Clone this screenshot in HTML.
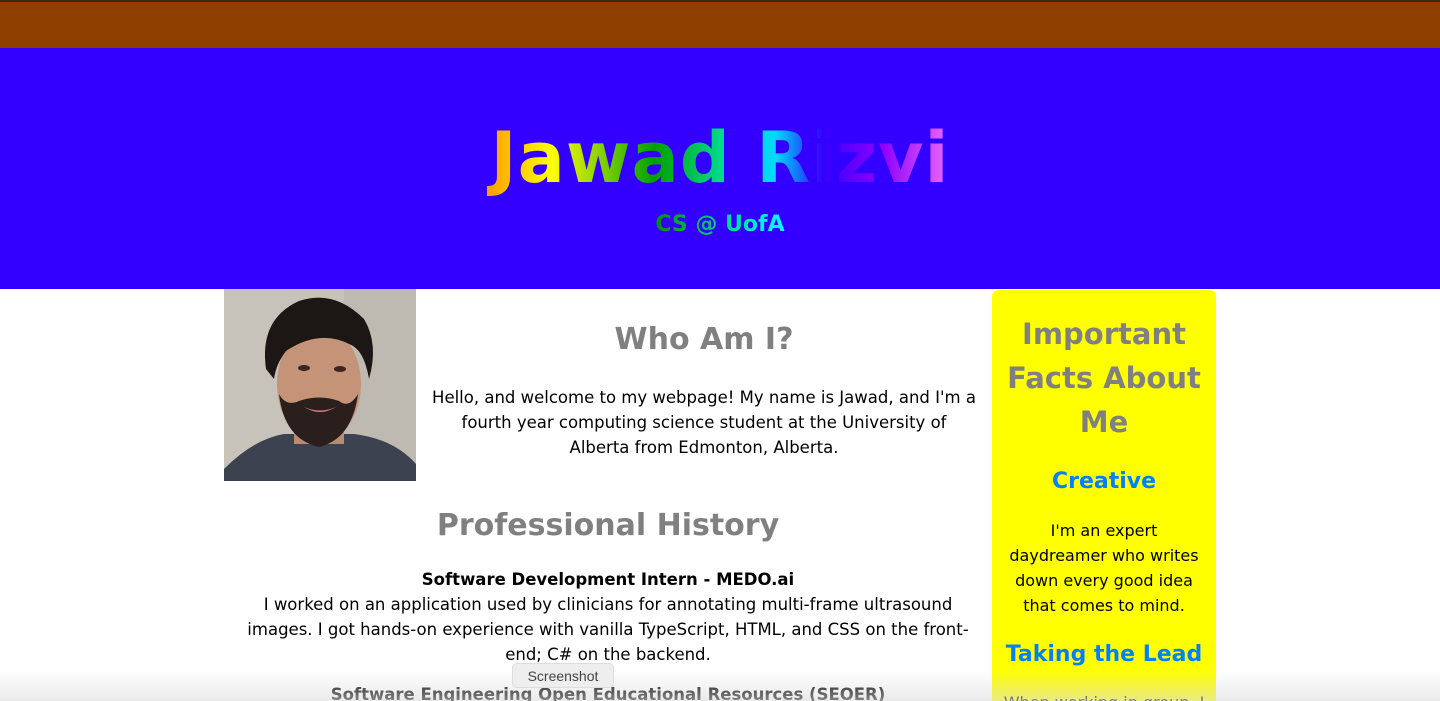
<!DOCTYPE html>
<html style="width:1440px;height:701px;overflow:hidden"><head><meta charset="utf-8"><style>
*{margin:0;padding:0;box-sizing:border-box}
body{width:1440px;height:701px;overflow:hidden;background:#fff;font-family:"Comic Sans MS","DejaVu Sans","Liberation Sans",sans-serif;position:relative}
.top{position:absolute;left:0;top:0;width:1440px;height:48px;background:#8f3f00;border-top:2px solid #3a2a1a}
.hdr{position:absolute;left:0;top:48px;width:1440px;height:241px;background:#3300ff;text-align:center}
.name{position:absolute;left:0;right:0;top:60px;font-size:70px;font-weight:bold;letter-spacing:1px;line-height:100px;}
.name span{background:linear-gradient(90deg,#ff9d00 0%,#ffff00 14%,#00a000 36%,#00e0a0 52%,#00d8ff 62%,#3300ff 72%,#9000ff 85%,#f070ff 100%);-webkit-background-clip:text;background-clip:text;color:transparent;padding:0 4px}
.sub{position:absolute;left:0;right:0;top:162px;font-size:22px;font-weight:bold;line-height:30px}
.sub span{background:linear-gradient(90deg,#009000,#00e0a0 60%,#00ffff);-webkit-background-clip:text;background-clip:text;color:transparent}
.photo{position:absolute;left:224px;top:289px;width:192px;height:192px}
.main{position:absolute;left:416px;top:289px;width:576px;text-align:center;color:#000}
h2{color:#808080;font-size:30px;font-weight:bold}
.p{font-size:16.5px;line-height:25px}
.hist{position:absolute;left:224px;top:500px;width:768px;text-align:center}
.side{position:absolute;left:992px;top:290px;width:224px;height:411px;overflow:hidden;background:#ffff00;border-radius:6px 6px 0 0;text-align:center}
.side h2{position:absolute;left:0;right:0;top:22px;font-size:29px;line-height:44px}
.side h3{position:absolute;left:0;right:0;color:#0080ff;font-size:22px;font-weight:bold;line-height:30px}
.side .p{position:absolute;left:0;right:0}
.shadow{position:absolute;left:0;top:670px;width:1440px;height:31px;background:linear-gradient(rgba(255,255,255,0),rgba(220,220,220,.6))}
.tip{position:absolute;left:512px;top:663px;width:102px;height:25px;background:#eee;border:1px solid #ddd;border-radius:5px;font:14px "Liberation Sans",sans-serif;color:#444;text-align:center;line-height:24px}
</style></head><body>
<div class="top"></div>
<div class="hdr">
<div class="name"><span>Jawad Rizvi</span></div>
<div class="sub"><span>CS @ UofA</span></div>
</div>
<svg class="photo" viewBox="0 0 192 192">
<rect width="192" height="192" fill="#c8c3ba"/>
<rect x="120" width="72" height="192" fill="#bfbab1"/>
<path d="M0 180 Q30 150 60 145 L130 145 Q170 150 192 175 L192 192 L0 192Z" fill="#3d4250"/>
<rect x="70" y="120" width="50" height="35" fill="#b98b72"/>
<ellipse cx="95" cy="95" rx="42" ry="58" fill="#c59478"/>
<path d="M55 105 Q60 150 95 158 Q128 150 134 105 Q125 120 115 112 Q95 105 75 112 Q62 118 55 105Z" fill="#2a1f1c"/>
<path d="M80 118 Q96 125 112 118 Q96 128 80 118Z" fill="#d87a7a"/>
<path d="M42 80 Q35 30 75 12 Q110 0 140 30 Q155 55 145 90 Q140 60 125 55 Q95 40 62 62 Q52 75 50 90Z" fill="#1c1614"/>
<ellipse cx="80" cy="79" rx="6" ry="3" fill="#3a2620"/><ellipse cx="116" cy="80" rx="6" ry="3" fill="#3a2620"/>
</svg>
<div class="main">
<h2 style="margin-top:30px;line-height:42px">Who Am I?</h2>
<p class="p" style="margin-top:24px;padding:0 4px">Hello, and welcome to my webpage! My name is Jawad, and I'm a<br>fourth year computing science student at the University of<br>Alberta from Edmonton, Alberta.</p>
</div>
<div class="hist">
<h2 style="line-height:52px">Professional History</h2>
<p class="p" style="margin-top:15px"><b>Software Development Intern - MEDO.ai</b><br>I worked on an application used by clinicians for annotating multi-frame ultrasound<br>images. I got hands-on experience with vanilla TypeScript, HTML, and CSS on the front-<br>end; C# on the backend.</p>
<p class="p" style="margin-top:15px"><b>Software Engineering Open Educational Resources (SEOER)</b></p>
</div>
<div class="side">
<h2>Important<br>Facts About<br>Me</h2>
<h3 style="top:177px">Creative</h3>
<p class="p" style="top:228px;font-size:16px">I'm an expert<br>daydreamer who writes<br>down every good idea<br>that comes to mind.</p>
<h3 style="top:350px">Taking the Lead</h3>
<p class="p" style="top:400px;white-space:nowrap;font-size:16px">When working in group, I</p>
</div>
<div class="shadow"></div>
<div class="tip">Screenshot</div>
</body></html>
